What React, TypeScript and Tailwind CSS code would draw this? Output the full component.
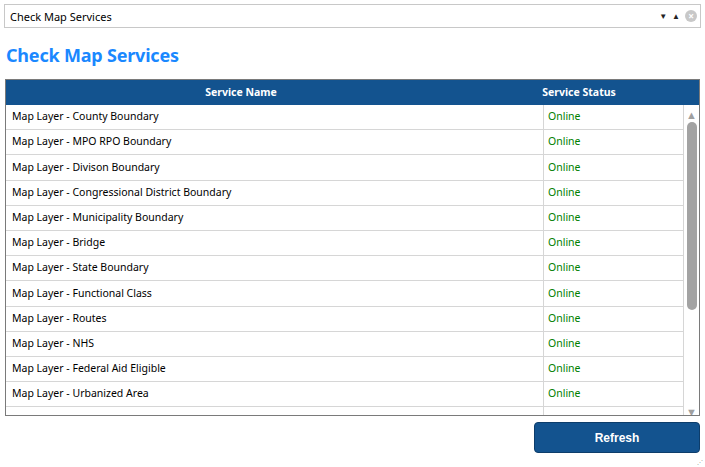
import React from "react";

const rows = ["County Boundary","MPO RPO Boundary","Divison Boundary","Congressional District Boundary","Municipality Boundary","Bridge","State Boundary","Functional Class","Routes","NHS","Federal Aid Eligible","Urbanized Area"];

export default function App() {
  return (
    <div className="w-[705px] h-[467px] bg-white relative" style={{ fontFamily: '"Segoe UI","Noto Sans",sans-serif' }}>
      <div className="pt-[4px] px-[4px]">
        <div className="h-[24px] border border-[#c8c8c8] flex items-center pl-[5px] pr-[3px] text-[11px] text-black">
          <span className="flex-1 pt-[2px]">Check Map Services</span>
          <span className="text-[8px] text-[#222] mr-[5px]">▼</span>
          <span className="text-[8px] text-[#222] mr-[5px]">▲</span>
          <span className="w-[12px] h-[12px] rounded-full bg-[#c8c8c8] text-white text-[10px] leading-[12px] text-center font-bold">×</span>
        </div>
      </div>
      <div className="px-[6px] mt-[15px] h-[24px] text-[18px] font-bold text-[#1a88ff] leading-[24px] tracking-[-0.2px]">Check Map Services</div>
      <div className="mx-[5px] mt-[12px] border border-[#7a7a7a] h-[337px] overflow-hidden">
        <div className="flex h-[25px] bg-[#13538f] text-white text-[10.5px] font-bold items-center">
          <div className="w-[470px] text-center">Service Name</div>
          <div className="w-[206px] text-center">Service Status</div>
        </div>
        <div className="flex">
          <div className="w-[678px]">
            {rows.map((r) => (
              <div key={r} className="flex h-[25.2px] border-b border-[#d6d6d6] text-[10.5px] items-center">
                <div className="w-[538px] pl-[6px] text-black border-r border-[#d6d6d6] h-full flex items-center">Map Layer - {r}</div>
                <div className="w-[140px] pl-[4px] text-[#008000] border-r border-[#d6d6d6] h-full flex items-center">Online</div>
              </div>
            ))}
            <div className="flex h-[25px]">
              <div className="w-[538px] border-r border-[#d6d6d6] h-full" />
              <div className="w-[140px] border-r border-[#d6d6d6] h-full" />
            </div>
          </div>
          <div className="w-[17px] h-[310px] flex flex-col items-center pt-[4px]">
            <span className="text-[11px] text-[#a0a0a0] leading-[11px]">▲</span>
            <div className="w-[10px] h-[188px] rounded-full bg-[#a3a3a3] mt-[2px]" />
            <div className="flex-1" />
            <span className="text-[11px] text-[#a0a0a0] leading-[11px] mb-[-2px]">▼</span>
          </div>
        </div>
      </div>
      <div className="flex justify-end pr-[5px] mt-[6px]">
        <button className="w-[166px] h-[31px] rounded-[4px] bg-[#13538f] border border-[#0d3d6b] text-white font-bold text-[12px]" style={{ fontFamily: '"Liberation Sans",Arial,sans-serif' }}>Refresh</button>
      </div>
      <div className="absolute right-[2px] bottom-[2px] text-[6px] text-[#999] leading-none">⋰</div>
    </div>
  );
}
